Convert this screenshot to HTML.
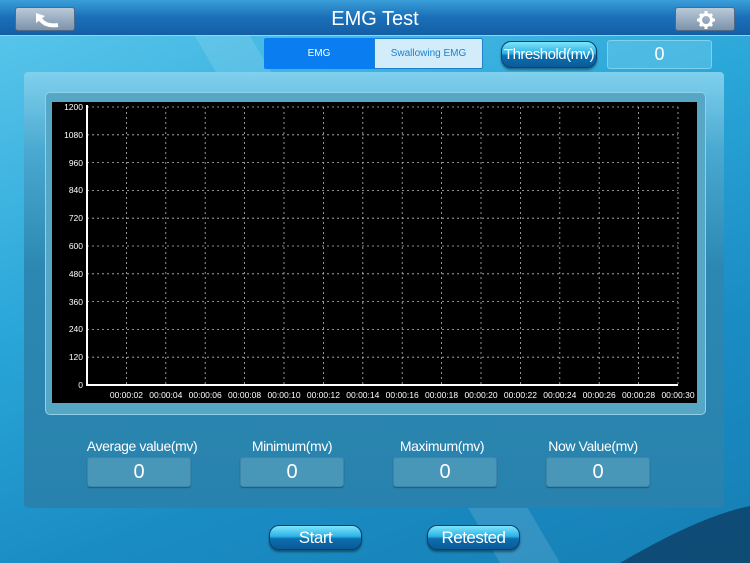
<!DOCTYPE html>
<html><head><meta charset="utf-8"><style>
*{margin:0;padding:0;box-sizing:border-box}
body{width:750px;height:563px;overflow:hidden;font-family:"Liberation Sans",sans-serif;position:relative;background:linear-gradient(160deg,#5cc8ec 0%,#2aa6d8 40%,#1a8cc4 70%,#167fb4 100%)}
.hdr{position:absolute;left:0;top:0;width:750px;height:36px;background:linear-gradient(#3a9ed8,#1a6fb8 50%,#135fa5);border-bottom:1px solid #8fd4f4}
.hdr h1{position:absolute;left:0;width:750px;top:8px;text-align:center;color:#fff;font-size:20px;font-weight:normal}
.hb{position:absolute;top:7px;width:60px;height:24px;border-radius:3px;background:linear-gradient(#b9c9d8,#7c93ab);border:1px solid #506a86}
.seg{position:absolute;top:38px;height:31px;font-size:10px;display:flex;align-items:center;justify-content:center}
.btn{position:absolute;border-radius:10px;background:linear-gradient(#7ee6fa,#2db2e6 45%,#0c6fae 55%,#0a5a99);border:1px solid #08406f;color:#fff;display:flex;align-items:center;justify-content:center;box-shadow:0 2px 2px rgba(0,0,0,.4);letter-spacing:-0.5px}
.panel{position:absolute;left:24px;top:72px;width:700px;height:436px;border-radius:4px;background:linear-gradient(#80d0ee 0%,#4aa9d0 18%,#2c88b2 45%,#2882ad 100%)}
.frame{position:absolute;left:45px;top:92px;width:661px;height:323px;border-radius:5px;background:#56a6c6;border:1px solid #8fd0ea}
.lab{position:absolute;top:438px;color:#fff;font-size:14px;text-align:center;width:140px;letter-spacing:-0.4px}
.val{position:absolute;top:457px;width:104px;height:30px;background:#4896b8;border:1px solid #3d86a8;border-radius:3px;color:#fff;font-size:20px;text-align:center;line-height:28px;box-shadow:0 1px 1px rgba(0,0,0,.3)}
</style></head><body>
<svg style="position:absolute;left:0;top:36px" width="750" height="527">
<path d="M195 0 L250 0 L560 527 L500 527 Z" fill="#ffffff" opacity="0.12"/>
<path d="M620 527 Q700 480 750 470 L750 527Z" fill="#0d3f66" opacity="0.8"/>
</svg>
<div class="hdr"><h1>EMG Test</h1>
<div class="hb" style="left:15px"><svg width="60" height="24"><path d="M20 5 L20 15 L29 8 Z" fill="#fff"/><path d="M23 9 Q28 19 42 17" stroke="#fff" stroke-width="4" fill="none"/></svg></div>
<div class="hb" style="left:675px"><svg width="60" height="24"><circle cx="30" cy="12" r="5.5" fill="none" stroke="#fff" stroke-width="3"/><g stroke="#fff" stroke-width="3"><path d="M30 3v4M30 17v4M21 12h4M35 12h4M24 6l2.5 2.5M33.5 15.5L36 18M36 6l-2.5 2.5M26.5 15.5L24 18"/></g></svg></div>
</div>
<div class="seg" style="left:264px;width:110px;background:#0a7ef0;color:#fff;border-radius:2px 0 0 2px">EMG</div>
<div class="seg" style="left:374px;width:109px;background:#d2ecfa;color:#1f7fd0;border:1px solid #1f7fd0;border-radius:0 2px 2px 0">Swallowing EMG</div>
<div class="btn" style="left:501px;top:41px;width:96px;height:27px;font-size:15px">Threshold(mv)</div>
<div style="position:absolute;left:607px;top:40px;width:105px;height:29px;border:1px solid #7fd2ee;border-radius:3px;background:rgba(120,210,240,.4);color:#fff;font-size:18px;text-align:center;line-height:27px">0</div>
<div class="panel"></div>
<div class="frame"></div>
<svg style="position:absolute;left:52px;top:102px" width="645" height="301" viewBox="52 102 645 301">
<rect x="52" y="102" width="645" height="301" fill="#000"/>
<g stroke="#bbb" stroke-width="0.8" stroke-dasharray="2,3">
<path d="M126.4 107V385M165.8 107V385M205.2 107V385M244.6 107V385M284 107V385M323.4 107V385M362.8 107V385M402.2 107V385M441.6 107V385M481 107V385M520.4 107V385M559.8 107V385M599.2 107V385M638.6 107V385M678 107V385"/>
<path d="M87 357.2H678M87 329.4H678M87 301.6H678M87 273.8H678M87 246H678M87 218.2H678M87 190.4H678M87 162.6H678M87 134.8H678M87 107H678"/>
</g>
<path d="M87 105V385H678" stroke="#fff" stroke-width="2" fill="none"/>
<g fill="#fff" font-size="8.5" font-family="Liberation Sans" text-anchor="end">
<text x="83" y="110">1200</text><text x="83" y="138">1080</text><text x="83" y="166">960</text><text x="83" y="193">840</text><text x="83" y="221">720</text><text x="83" y="249">600</text><text x="83" y="277">480</text><text x="83" y="305">360</text><text x="83" y="332">240</text><text x="83" y="360">120</text><text x="83" y="388">0</text>
</g>
<g fill="#fff" font-size="8.5" font-family="Liberation Sans" text-anchor="middle">
<text x="126.4" y="398">00:00:02</text><text x="165.8" y="398">00:00:04</text><text x="205.2" y="398">00:00:06</text><text x="244.6" y="398">00:00:08</text><text x="284" y="398">00:00:10</text><text x="323.4" y="398">00:00:12</text><text x="362.8" y="398">00:00:14</text><text x="402.2" y="398">00:00:16</text><text x="441.6" y="398">00:00:18</text><text x="481" y="398">00:00:20</text><text x="520.4" y="398">00:00:22</text><text x="559.8" y="398">00:00:24</text><text x="599.2" y="398">00:00:26</text><text x="638.6" y="398">00:00:28</text><text x="678" y="398">00:00:30</text>
</g>
</svg>
<div class="lab" style="left:72px">Average value(mv)</div>
<div class="lab" style="left:222px">Minimum(mv)</div>
<div class="lab" style="left:372px">Maximum(mv)</div>
<div class="lab" style="left:523px">Now Value(mv)</div>
<div class="val" style="left:87px">0</div>
<div class="val" style="left:240px">0</div>
<div class="val" style="left:393px">0</div>
<div class="val" style="left:546px">0</div>
<div class="btn" style="left:269px;top:525px;width:93px;height:25px;font-size:17px">Start</div>
<div class="btn" style="left:427px;top:525px;width:93px;height:25px;font-size:17px">Retested</div>
</body></html>
